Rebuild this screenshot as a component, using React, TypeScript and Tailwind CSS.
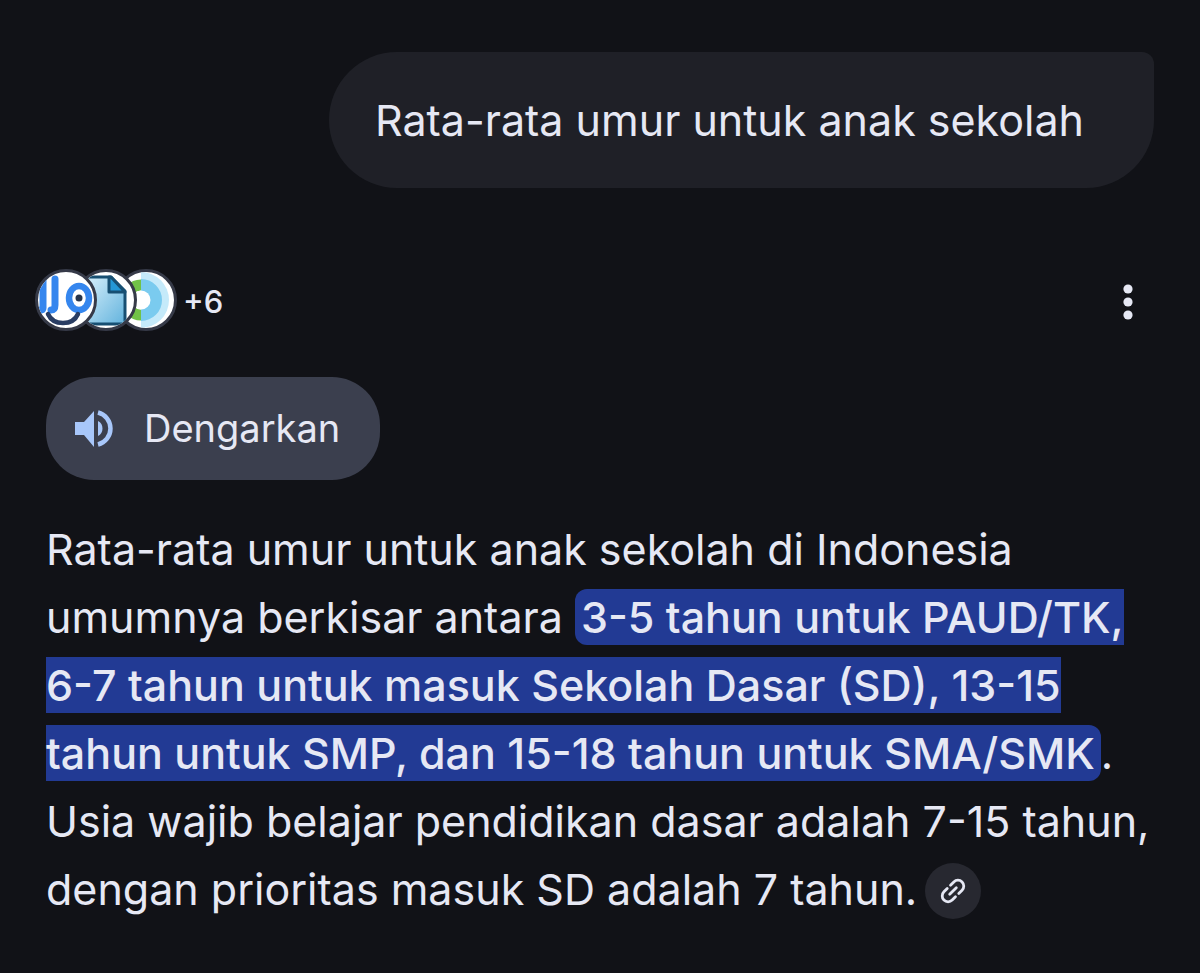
import React from "react";

function SourceBadges() {
  return (
    <button type="button" aria-label="Lihat sumber" className="flex items-center">
      <span className="relative z-20 size-[62px] shrink-0 overflow-hidden rounded-full border-[3px] border-[#363a48] bg-white">
        <svg viewBox="1 1 56 56" className="size-full" fill="none" aria-hidden="true">
          <path d="M6 9v28q0 2-3 2M18 8v26q0 5-4 5" stroke="#3586ee" strokeWidth="7" strokeLinecap="round" />
          <ellipse cx="42" cy="27" rx="10" ry="12" stroke="#3586ee" strokeWidth="6.5" />
          <circle cx="42" cy="27" r="3.5" fill="#26344c" />
          <path d="M11 43q4 9 15 9t15-9" stroke="#293d63" strokeWidth="4.5" strokeLinecap="round" />
        </svg>
      </span>
      <span className="relative z-10 -ml-[22px] size-[62px] shrink-0 overflow-hidden rounded-full border-[3px] border-[#363a48] bg-white">
        <svg viewBox="1 1 56 56" className="size-full" aria-hidden="true">
          <defs>
            <linearGradient id="page" x1="0" y1="0" x2="1" y2="1">
              <stop offset="0" stopColor="#d9f0fb" />
              <stop offset="1" stopColor="#62b3dd" />
            </linearGradient>
          </defs>
          <path d="M8 6h26l14 14v33H8z" fill="url(#page)" stroke="#174f72" strokeWidth="3" strokeLinejoin="round" />
          <path d="M32 6v15h16L34 6z" fill="#2497d5" stroke="#174f72" strokeWidth="3" strokeLinejoin="round" />
        </svg>
      </span>
      <span className="-ml-[22px] size-[62px] shrink-0 overflow-hidden rounded-full border-[3px] border-[#363a48] bg-white">
        <svg viewBox="1 1 56 56" className="size-full" fill="none" aria-hidden="true">
          <path d="M24 1a28 28 0 0 1 0 56z" fill="#c5eafa" />
          <path d="M24 14a15 15 0 0 1 0 30" stroke="#7acbef" strokeWidth="12" />
          <path d="M24 14a15 15 0 0 0 0 30" stroke="#72c247" strokeWidth="11" />
          <circle cx="24" cy="29" r="9.5" fill="#fff" />
        </svg>
      </span>
      <span className="ml-[6px] pt-1 text-[31px] leading-10 font-medium">+6</span>
    </button>
  );
}

export default function App() {
  return (
    <main className="min-h-screen bg-[#111217] px-[46px] pt-[52px] pb-8 font-['Inter','Liberation_Sans',sans-serif] text-[#e6e8f4]">
      <div className="flex justify-end">
        <p className="rounded-[68px] rounded-tr-xl bg-[#1f2027] py-[34px] pr-[70px] pl-[46px] text-[43px] leading-[68px]">
          Rata-rata umur untuk anak sekolah
        </p>
      </div>

      <div className="mt-[81px] flex items-center justify-between">
        <div className="-ml-[11px]">
          <SourceBadges />
        </div>
        <button type="button" aria-label="Opsi lainnya" className="flex h-[62px] w-[52px] items-center justify-center pt-1">
          <svg viewBox="0 0 10 36" className="h-9 w-[10px]" fill="currentColor" aria-hidden="true">
            <circle cx="5" cy="5" r="4.6" />
            <circle cx="5" cy="18" r="4.6" />
            <circle cx="5" cy="31" r="4.6" />
          </svg>
        </button>
      </div>

      <button type="button" className="mt-[46px] flex h-[103px] items-center gap-[30px] rounded-[48px] bg-[#3b3f4e] pr-10 pl-7 text-[38px]">
        <svg viewBox="0 0 40 38" className="h-[38px] w-10" aria-hidden="true">
          <path d="M1 12h9L20 1v36L10 25H1zM24 11a8.500 8.500 0 0 1 0 15z" fill="#a8c7fa" />
          <path d="M24 2.500a16.500 16.500 0 0 1 0 32" fill="none" stroke="#a8c7fa" strokeWidth="4.500" />
        </svg>
        Dengarkan
      </button>

      <p className="mt-[35px] text-[43px] leading-[68px] whitespace-nowrap">
        Rata-rata umur untuk anak sekolah di Indonesia
        <br />
        umumnya berkisar antara{" "}
        <mark className="rounded-xl bg-[#223a94] px-[6px] py-[2px] font-medium text-inherit">
          3-5 tahun untuk PAUD/TK,
          <br />
          6-7 tahun untuk masuk Sekolah Dasar (SD), 13-15
          <br />
          tahun untuk SMP, dan 15-18 tahun untuk SMA/SMK
        </mark>
        .
        <br />
        Usia wajib belajar pendidikan dasar adalah 7-15 tahun,
        <br />
        dengan prioritas masuk SD adalah 7 tahun.{" "}
        <button type="button" aria-label="Tautan sumber" className="mb-1 -ml-1 inline-flex size-14 items-center justify-center rounded-full bg-[#272830] align-middle">
          <svg viewBox="0 0 24 24" className="size-7" fill="none" stroke="currentColor" strokeWidth="2.4" strokeLinecap="round" aria-hidden="true">
            <g transform="rotate(-45 12 12)">
              <path d="M10 17H6A5 5 0 0 1 6 7h4M14 7h4a5 5 0 0 1 0 10h-4M8 12h8" />
            </g>
          </svg>
        </button>
      </p>
    </main>
  );
}
